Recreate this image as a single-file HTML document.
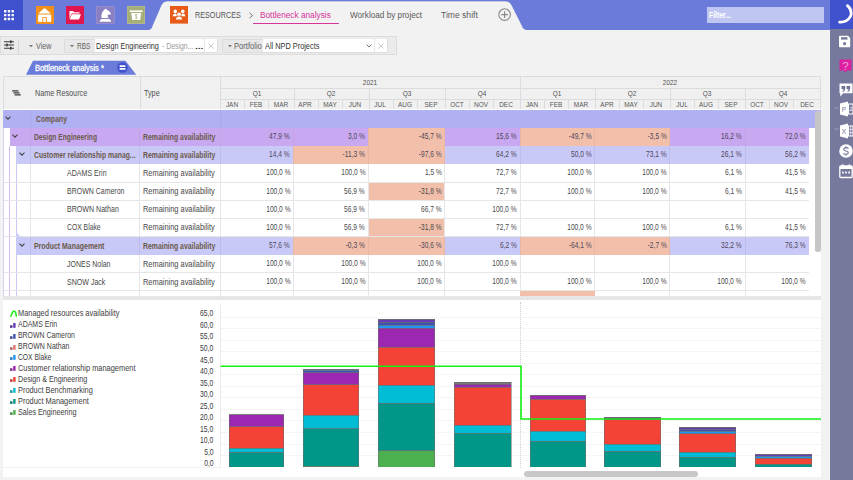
<!DOCTYPE html>
<html><head><meta charset="utf-8"><style>
html,body{margin:0;padding:0;width:853px;height:480px;overflow:hidden;background:#f2f2f2}
body{position:relative;font-family:"Liberation Sans", sans-serif}
body div, body svg{position:absolute}
body svg{overflow:visible}
.t{white-space:nowrap}
</style></head><body>
<div style="left:0px;top:0px;width:853px;height:480px;background:#f2f2f2;"></div>
<div style="left:0px;top:0px;width:830px;height:30px;background:#6a7bda;"></div>
<div style="left:0px;top:0px;width:23px;height:30px;background:#3f51cc;"></div>
<svg style="left:0;top:0" width="23" height="30" viewBox="0 0 23 30"><rect x="4.00" y="10.10" width="2.4" height="2.4" rx="0.5" fill="#fff"/><rect x="4.00" y="13.95" width="2.4" height="2.4" rx="0.5" fill="#fff"/><rect x="4.00" y="17.80" width="2.4" height="2.4" rx="0.5" fill="#fff"/><rect x="7.75" y="10.10" width="2.4" height="2.4" rx="0.5" fill="#fff"/><rect x="7.75" y="13.95" width="2.4" height="2.4" rx="0.5" fill="#fff"/><rect x="7.75" y="17.80" width="2.4" height="2.4" rx="0.5" fill="#fff"/><rect x="11.50" y="10.10" width="2.4" height="2.4" rx="0.5" fill="#fff"/><rect x="11.50" y="13.95" width="2.4" height="2.4" rx="0.5" fill="#fff"/><rect x="11.50" y="17.80" width="2.4" height="2.4" rx="0.5" fill="#fff"/></svg>
<svg style="left:0;top:0" width="853" height="31" viewBox="0 0 853 31">
<path d="M148 30.5 Q151.5 29.5 152.5 27 L162 5 Q163.5 1.8 167 1.8 L506 1.8 Q509.5 1.8 511 5 L522 27 Q523.5 29.5 527 30.5 Z" fill="#f2f2f2"/>
<path d="M152.5 27 L162 5 Q163.5 1.8 167 1.8 L506 1.8 Q509.5 1.8 511 5 L522 27" fill="none" stroke="#fbfbf0" stroke-width="0.7"/>
</svg>
<div style="left:36px;top:6px;width:18px;height:18px"><svg width="18" height="18" viewBox="0 0 18 18"><rect width="18" height="18" fill="#f2901c"/><path d="M8.6 2.1 L14.4 7 L2.8 7 Z" fill="#fff"/><rect x="2.8" y="7" width="11.6" height="1.8" fill="#f6c98f"/><rect x="2.1" y="8.8" width="13.1" height="7.1" fill="#fff"/><rect x="6.3" y="11.1" width="4.5" height="4.8" fill="#f2901c"/><rect x="7.2" y="12" width="2.7" height="3.9" fill="#fff"/></svg></div>
<div style="left:66.4px;top:6px;width:18px;height:18px"><svg width="18" height="18" viewBox="0 0 18 18"><rect width="18" height="18" fill="#e2164e"/><path d="M3.5 5 L7 5 L8 6.2 L13.5 6.2 L13.5 7.5 L5.5 7.5 L3.5 13 Z" fill="#fff"/><path d="M5.8 8.3 L15 8.3 L13 13.5 L3.7 13.5 Z" fill="#fff"/></svg></div>
<div style="left:96.4px;top:6px;width:18px;height:18px"><svg width="18.5" height="17.8" viewBox="0 0 18.5 17.8"><rect x="0.25" y="0.25" width="18" height="17.3" fill="#8a7fc0" stroke="#a79cd3" stroke-width="0.5"/><path d="M10 2.6 L10.9 3.7 Q13.6 4.9 14.9 7.6 L14.3 8.7 Q13 8.3 12.1 8.7 Q11.1 9.3 11.7 10.3 L12.6 11.9 L5.5 11.9 Q5.1 8.5 6.4 6 Q7.8 3.8 10 2.6 Z" fill="#fff"/><path d="M3.6 15.7 Q3.8 13.3 6 13 L12.8 13 Q15 13.3 15.2 15.7 Z" fill="#fff"/></svg></div>
<div style="left:127.2px;top:6px;width:18px;height:18px"><svg width="18" height="18" viewBox="0 0 18 18"><rect x="0.25" y="0.25" width="17.5" height="17.5" fill="#a6ae78" stroke="#c4cc8e" stroke-width="0.5"/><rect x="2.8" y="4.4" width="12.7" height="1.7" fill="#fff"/><path d="M4.2 6.9 L14.1 6.9 L13.2 14 L5.2 14 Z" fill="#fff"/><path d="M9.2 7.9 V13.2 M10.3 8.9 Q9.2 8.2 8.3 8.9 Q7.9 9.8 9.2 10.5 Q10.5 11.2 10.1 12.1 Q9.2 12.8 8.2 12.1" fill="none" stroke="#b3bb86" stroke-width="0.8"/></svg></div>
<div style="left:170px;top:6.2px;width:18px;height:17.6px"><svg width="18" height="17.6" viewBox="0 0 18 17.6"><rect width="18" height="17.6" fill="#e75a17"/>
<circle cx="5.3" cy="5.4" r="1.8" fill="#fff"/><path d="M2.6 10.3 Q2.8 7.6 5.3 7.4 Q7.8 7.6 8 10.3 Z" fill="#fff"/>
<circle cx="12.8" cy="5.4" r="1.8" fill="#fff"/><path d="M10.1 10.3 Q10.3 7.6 12.8 7.4 Q15.3 7.6 15.5 10.3 Z" fill="#fff"/>
<circle cx="9.05" cy="8.3" r="1.9" fill="#fff" stroke="#e75a17" stroke-width="1.4" paint-order="stroke fill"/><path d="M5.9 13.6 Q6.1 10.6 9.05 10.4 Q12 10.6 12.2 13.6 Z" fill="#fff" stroke="#e75a17" stroke-width="1.4" paint-order="stroke fill"/></svg></div>
<div class="t" style="left:194.60px;top:6.78px;height:15.040000000000001px;line-height:15.040000000000001px;font-size:9.4px;font-weight:400;color:#555;transform:scaleX(0.771);transform-origin:0 50%;">RESOURCES</div>
<svg style="left:248px;top:11.5px" width="6" height="7" viewBox="0 0 6 7"><path d="M1.5 0.8 L4.5 3.5 L1.5 6.2" fill="none" stroke="#777" stroke-width="1"/></svg>
<div class="t" style="left:259.70px;top:9.01px;height:13.280000000000001px;line-height:13.280000000000001px;font-size:8.3px;font-weight:400;color:#d6339a;transform:scaleX(0.997);transform-origin:0 50%;">Bottleneck analysis</div>
<div style="left:253px;top:22.8px;width:85.5px;height:1.6px;background:#d8359b;border-radius:1px"></div>
<div class="t" style="left:350.00px;top:9.01px;height:13.280000000000001px;line-height:13.280000000000001px;font-size:8.3px;font-weight:400;color:#5a5a5a;transform:scaleX(0.986);transform-origin:0 50%;">Workload by project</div>
<div class="t" style="left:441.20px;top:9.01px;height:13.280000000000001px;line-height:13.280000000000001px;font-size:8.3px;font-weight:400;color:#5a5a5a;transform:scaleX(1.032);transform-origin:0 50%;">Time shift</div>
<svg style="left:497.5px;top:7.6px" width="13.2" height="13.2" viewBox="0 0 13.2 13.2"><circle cx="6.6" cy="6.6" r="5.8" fill="none" stroke="#888" stroke-width="1.1"/><path d="M6.6 3.3 V9.9 M3.3 6.6 H9.9" stroke="#888" stroke-width="1.2"/></svg>
<div style="left:707px;top:7px;width:117px;height:15.8px;background:#c0c6f2;"></div>
<div class="t" style="left:708.90px;top:9.08px;height:13.440000000000001px;line-height:13.440000000000001px;font-size:8.4px;font-weight:700;color:#fff;transform:scaleX(0.820);transform-origin:0 50%;">Filter...</div>
<div style="left:830px;top:0px;width:23px;height:480px;background:#76799c;"></div>
<div style="left:830px;top:0px;width:23px;height:29.3px;background:#3f51cc;"></div>
<svg style="left:830px;top:0" width="23" height="30" viewBox="0 0 23 30"><path d="M9.6 22.2 Q17.2 22.6 20.6 16.2 Q22.6 11 17.6 5.6" fill="none" stroke="#fff" stroke-width="2.7" stroke-linecap="round"/><path d="M16.6 5.2 Q20.8 7.6 21.8 11 M17.4 4.6 Q21.6 6.8 22.6 10.2 M15.8 6 Q19.6 8.2 20.6 11.6" fill="none" stroke="#fff" stroke-width="0.55" opacity="0.7"/></svg>
<svg style="left:838px;top:34.5px" width="13" height="13" viewBox="0 0 13 13"><path d="M1 1.5 Q1 0.8 1.7 0.8 L10 0.8 L12.2 3 L12.2 11.5 Q12.2 12.2 11.5 12.2 L1.7 12.2 Q1 12.2 1 11.5 Z" fill="#fff"/><rect x="3" y="2.2" width="6.5" height="2.4" fill="#76799c"/><circle cx="6.6" cy="8.6" r="1.6" fill="#76799c"/></svg>
<svg style="left:839px;top:58.5px" width="13" height="15" viewBox="0 0 13 15"><path d="M0.5 0.5 H12.5 V11.5 H8 L6.5 13.8 L5 11.5 H0.5 Z" fill="#dd1fa2"/><text x="6.5" y="10.6" font-size="11.5" text-anchor="middle" fill="#f4a8da" font-family="Liberation Sans">?</text></svg>
<svg style="left:838.8px;top:83.2px" width="14" height="15" viewBox="0 0 14 15"><path d="M0.5 0.4 H13.5 V10.2 H4.2 L1.2 13.4 V10.2 H0.5 Z" fill="#fff"/><path d="M2.6 3 H6.2 V5.6 Q6.1 8.4 3.8 9 L3.4 8.1 Q4.6 7.5 4.7 6.2 H2.6 Z M7.6 3 H11.2 V5.6 Q11.1 8.4 8.8 9 L8.4 8.1 Q9.6 7.5 9.7 6.2 H7.6 Z" fill="#6e7194"/></svg>
<svg style="left:833.5px;top:105.5px" width="5" height="4" viewBox="0 0 5 4"><path d="M0.5 0.8 L2.5 3 L4.5 0.8" fill="none" stroke="#a9abc4" stroke-width="0.8"/></svg>
<svg style="left:833.5px;top:126.5px" width="5" height="4" viewBox="0 0 5 4"><path d="M0.5 0.8 L2.5 3 L4.5 0.8" fill="none" stroke="#a9abc4" stroke-width="0.8"/></svg>
<svg style="left:840px;top:100.5px" width="13" height="16" viewBox="0 0 13 16"><path d="M0 2.5 L8 0.5 V15.5 L0 13.5 Z" fill="#fff"/><rect x="8.5" y="3" width="4.5" height="10" fill="none" stroke="#fff" stroke-width="1"/><text x="4" y="10.5" font-size="6.5" text-anchor="middle" fill="#76799c" font-family="Liberation Sans">P</text><text x="11" y="10" font-size="5" text-anchor="middle" fill="#fff" font-family="Liberation Sans">2</text></svg>
<svg style="left:840px;top:122.5px" width="13" height="16" viewBox="0 0 13 16"><path d="M0 2.5 L8 0.5 V15.5 L0 13.5 Z" fill="#fff"/><rect x="8.5" y="3" width="4.5" height="10" fill="none" stroke="#fff" stroke-width="1"/><path d="M10.7 3 V13 M8.5 6.3 H13 M8.5 9.6 H13" stroke="#fff" stroke-width="0.6"/><text x="4" y="10.5" font-size="6.5" text-anchor="middle" fill="#76799c" font-family="Liberation Sans">X</text></svg>
<svg style="left:838.5px;top:143.5px" width="14" height="14" viewBox="0 0 14 14"><circle cx="7" cy="7" r="6.8" fill="#fff"/><path d="M9.4 4.6 Q8.8 3.6 7 3.6 Q4.8 3.7 4.8 5.3 Q4.9 6.6 7 7 Q9.3 7.4 9.3 8.8 Q9.2 10.4 7 10.4 Q5 10.4 4.5 9.3 M7 2.2 V3.6 M7 10.4 V11.8" fill="none" stroke="#76799c" stroke-width="1.2"/></svg>
<svg style="left:838.5px;top:164px" width="14" height="14" viewBox="0 0 14 14"><rect x="0.8" y="2" width="12.4" height="11.5" rx="1" fill="none" stroke="#fff" stroke-width="1.3"/><rect x="0.8" y="2" width="12.4" height="3" fill="#fff"/><rect x="3" y="0.3" width="1.4" height="2.5" fill="#fff"/><rect x="9.6" y="0.3" width="1.4" height="2.5" fill="#fff"/><rect x="3" y="7.6" width="1.8" height="1.8" fill="#fff"/><rect x="6.1" y="7.6" width="1.8" height="1.8" fill="#fff"/><rect x="9.2" y="7.6" width="1.8" height="1.8" fill="#fff"/></svg>
<div style="left:0px;top:35.8px;width:396.5px;height:19.6px;background:#ebebeb;border:0.7px solid #dcdcdc;box-sizing:border-box"></div>
<svg style="left:4px;top:40.3px" width="10" height="10" viewBox="0 0 10 10"><path d="M0 1.8 H10 M0 5 H10 M0 8.2 H10" stroke="#3a3a3a" stroke-width="1.1"/><rect x="6" y="0.4" width="1.6" height="2.8" fill="#3a3a3a"/><rect x="2.2" y="3.6" width="1.6" height="2.8" fill="#3a3a3a"/><rect x="6" y="6.8" width="1.6" height="2.8" fill="#3a3a3a"/></svg>
<div style="left:18px;top:38.5px;width:0.7px;height:15px;background:#d6d6d6;"></div>
<svg style="left:28.5px;top:45px" width="4" height="3" viewBox="0 0 4 3"><path d="M0 0 H4 L2 2.2 Z" fill="#777"/></svg>
<div class="t" style="left:36.40px;top:39.25px;height:14.4px;line-height:14.4px;font-size:9px;font-weight:400;color:#626262;transform:scaleX(0.800);transform-origin:0 50%;">View</div>
<div style="left:63.5px;top:38.8px;width:154px;height:14.2px;background:#e8e8e8;border:0.6px solid #dcdcdc;border-radius:1.5px;box-sizing:border-box"></div>
<svg style="left:69.5px;top:45px" width="4" height="3" viewBox="0 0 4 3"><path d="M0 0 H4 L2 2.2 Z" fill="#777"/></svg>
<div class="t" style="left:76.90px;top:39.25px;height:14.4px;line-height:14.4px;font-size:9px;font-weight:400;color:#626262;transform:scaleX(0.724);transform-origin:0 50%;">RBS</div>
<div style="left:95px;top:39.4px;width:109px;height:13px;background:#fff;"></div>
<div class="t" style="left:96.10px;top:39.41px;height:14.080000000000002px;line-height:14.080000000000002px;font-size:8.8px;font-weight:400;color:#333;transform:scaleX(0.818);transform-origin:0 50%;">Design Engineering</div>
<div class="t" style="left:162.40px;top:39.41px;height:14.080000000000002px;line-height:14.080000000000002px;font-size:8.8px;font-weight:400;color:#9a9a9a;transform:scaleX(0.781);transform-origin:0 50%;">- Design...</div>
<div class="t" style="left:195.20px;top:40.90px;height:12.8px;line-height:12.8px;font-size:8px;font-weight:700;color:#333;transform:scaleX(1.261);transform-origin:0 50%;">...</div>
<div style="left:204.5px;top:39.4px;width:12.5px;height:13px;background:#fff;"></div>
<svg style="left:207.7px;top:43px" width="6" height="6" viewBox="0 0 6 6"><path d="M0.5 0.5 L5.5 5.5 M5.5 0.5 L0.5 5.5" stroke="#bbb" stroke-width="0.8"/></svg>
<div style="left:221.5px;top:38.8px;width:166px;height:14.2px;background:#e8e8e8;border:0.6px solid #dcdcdc;border-radius:1.5px;box-sizing:border-box"></div>
<svg style="left:227.5px;top:45px" width="4" height="3" viewBox="0 0 4 3"><path d="M0 0 H4 L2 2.2 Z" fill="#777"/></svg>
<div class="t" style="left:234.00px;top:39.25px;height:14.4px;line-height:14.4px;font-size:9px;font-weight:400;color:#626262;transform:scaleX(0.842);transform-origin:0 50%;">Portfolio</div>
<div style="left:263.3px;top:39.4px;width:110.7px;height:13px;background:#fff;"></div>
<div class="t" style="left:265.00px;top:39.41px;height:14.080000000000002px;line-height:14.080000000000002px;font-size:8.8px;font-weight:400;color:#333;transform:scaleX(0.836);transform-origin:0 50%;">All NPD Projects</div>
<svg style="left:365.5px;top:43.5px" width="6" height="4" viewBox="0 0 6 4"><path d="M0.5 0.5 L3 3 L5.5 0.5" fill="none" stroke="#666" stroke-width="0.9"/></svg>
<div style="left:374.5px;top:39.4px;width:12.3px;height:13px;background:#fff;"></div>
<svg style="left:377.7px;top:43px" width="6" height="6" viewBox="0 0 6 6"><path d="M0.5 0.5 L5.5 5.5 M5.5 0.5 L0.5 5.5" stroke="#bbb" stroke-width="0.8"/></svg>
<svg style="left:20px;top:60px" width="120" height="16" viewBox="0 0 120 16"><path d="M6 14.8 L13 0.8 L105.5 0.8 L116.2 14.8 Z" fill="#6a7bda"/></svg>
<div class="t" style="left:34.50px;top:61.62px;height:13.76px;line-height:13.76px;font-size:8.6px;font-weight:400;color:#fff;transform:scaleX(0.868);transform-origin:0 50%;-webkit-text-stroke:0.3px #fff">Bottleneck analysis *</div>
<svg style="left:116.6px;top:62.3px" width="11" height="11" viewBox="0 0 11 11"><circle cx="5.5" cy="5.5" r="5.3" fill="#3f51cc"/><rect x="2.5" y="3.2" width="6" height="1.7" rx="0.6" fill="#fff"/><rect x="2.5" y="6.1" width="6" height="1.7" rx="0.6" fill="#fff"/></svg>
<div style="left:3px;top:76.7px;width:818px;height:219px;background:#fff;"></div>
<div style="left:3px;top:76.7px;width:817.9px;height:32.8px;background:#f0f0f0;"></div>
<div style="left:3px;top:76.2px;width:817.9px;height:1.0px;background:#dcdcdc;"></div>
<div style="left:2.5px;top:76.7px;width:1.0px;height:32.8px;background:#dcdcdc;"></div>
<div style="left:140.3px;top:76.7px;width:1.0px;height:32.8px;background:#dcdcdc;"></div>
<div style="left:220.0px;top:76.7px;width:1.0px;height:32.8px;background:#dcdcdc;"></div>
<div style="left:293.5px;top:88.2px;width:1.0px;height:21.3px;background:#dcdcdc;"></div>
<div style="left:368.5px;top:88.2px;width:1.0px;height:21.3px;background:#dcdcdc;"></div>
<div style="left:444.8px;top:88.2px;width:1.0px;height:21.3px;background:#dcdcdc;"></div>
<div style="left:520.1px;top:76.7px;width:1.0px;height:32.8px;background:#dcdcdc;"></div>
<div style="left:594.8px;top:88.2px;width:1.0px;height:21.3px;background:#dcdcdc;"></div>
<div style="left:669.8px;top:88.2px;width:1.0px;height:21.3px;background:#dcdcdc;"></div>
<div style="left:745.1px;top:88.2px;width:1.0px;height:21.3px;background:#dcdcdc;"></div>
<div style="left:820.1px;top:76.7px;width:1.0px;height:32.8px;background:#dcdcdc;"></div>
<div style="left:220.5px;top:87.7px;width:600px;height:1.0px;background:#dcdcdc;"></div>
<div style="left:220.5px;top:98.9px;width:600px;height:1.0px;background:#dcdcdc;"></div>
<svg style="left:12.3px;top:89.6px" width="9" height="6.4" viewBox="0 0 9 6.4"><path d="M0.2 0.8 H6.4 M1.4 2.9 H7.6 M2.6 5.0 H8.8" stroke="#3a3a3a" stroke-width="1.25"/></svg>
<div class="t" style="left:35.00px;top:86.72px;height:13.76px;line-height:13.76px;font-size:8.6px;font-weight:400;color:#505050;transform:scaleX(0.840);transform-origin:0 50%;">Name Resource</div>
<div class="t" style="left:144.00px;top:86.72px;height:13.76px;line-height:13.76px;font-size:8.6px;font-weight:400;color:#505050;transform:scaleX(0.840);transform-origin:0 50%;">Type</div>
<div class="t" style="left:169.7px;width:400px;text-align:center;top:76.76px;height:11.68px;line-height:11.68px;font-size:7.3px;font-weight:400;color:#505050;transform:scaleX(0.885);transform-origin:50% 50%;">2021</div>
<div class="t" style="left:469.9px;width:400px;text-align:center;top:76.76px;height:11.68px;line-height:11.68px;font-size:7.3px;font-weight:400;color:#505050;transform:scaleX(0.885);transform-origin:50% 50%;">2022</div>
<div class="t" style="left:56.64999999999998px;width:400px;text-align:center;top:88.01px;height:11.68px;line-height:11.68px;font-size:7.3px;font-weight:400;color:#505050;transform:scaleX(0.885);transform-origin:50% 50%;">Q1</div>
<div class="t" style="left:31.950000000000017px;width:400px;text-align:center;top:98.66px;height:11.68px;line-height:11.68px;font-size:7.3px;font-weight:400;color:#585858;transform:scaleX(0.885);transform-origin:50% 50%;">JAN</div>
<div style="left:244.1px;top:99.4px;width:1.0px;height:10.1px;background:#dcdcdc;"></div>
<div class="t" style="left:56.049999999999955px;width:400px;text-align:center;top:98.66px;height:11.68px;line-height:11.68px;font-size:7.3px;font-weight:400;color:#585858;transform:scaleX(0.885);transform-origin:50% 50%;">FEB</div>
<div style="left:268.2px;top:99.4px;width:1.0px;height:10.1px;background:#dcdcdc;"></div>
<div class="t" style="left:80.75px;width:400px;text-align:center;top:98.66px;height:11.68px;line-height:11.68px;font-size:7.3px;font-weight:400;color:#585858;transform:scaleX(0.885);transform-origin:50% 50%;">MAR</div>
<div class="t" style="left:130.89999999999998px;width:400px;text-align:center;top:88.01px;height:11.68px;line-height:11.68px;font-size:7.3px;font-weight:400;color:#505050;transform:scaleX(0.885);transform-origin:50% 50%;">Q2</div>
<div class="t" style="left:105.44999999999999px;width:400px;text-align:center;top:98.66px;height:11.68px;line-height:11.68px;font-size:7.3px;font-weight:400;color:#585858;transform:scaleX(0.885);transform-origin:50% 50%;">APR</div>
<div style="left:317.6px;top:99.4px;width:1.0px;height:10.1px;background:#dcdcdc;"></div>
<div class="t" style="left:129.54999999999995px;width:400px;text-align:center;top:98.66px;height:11.68px;line-height:11.68px;font-size:7.3px;font-weight:400;color:#585858;transform:scaleX(0.885);transform-origin:50% 50%;">MAY</div>
<div style="left:341.7px;top:99.4px;width:1.0px;height:10.1px;background:#dcdcdc;"></div>
<div class="t" style="left:155.0px;width:400px;text-align:center;top:98.66px;height:11.68px;line-height:11.68px;font-size:7.3px;font-weight:400;color:#585858;transform:scaleX(0.885);transform-origin:50% 50%;">JUN</div>
<div class="t" style="left:206.54999999999995px;width:400px;text-align:center;top:88.01px;height:11.68px;line-height:11.68px;font-size:7.3px;font-weight:400;color:#505050;transform:scaleX(0.885);transform-origin:50% 50%;">Q3</div>
<div class="t" style="left:180.45px;width:400px;text-align:center;top:98.66px;height:11.68px;line-height:11.68px;font-size:7.3px;font-weight:400;color:#585858;transform:scaleX(0.885);transform-origin:50% 50%;">JUL</div>
<div style="left:392.6px;top:99.4px;width:1.0px;height:10.1px;background:#dcdcdc;"></div>
<div class="t" style="left:204.54999999999995px;width:400px;text-align:center;top:98.66px;height:11.68px;line-height:11.68px;font-size:7.3px;font-weight:400;color:#585858;transform:scaleX(0.885);transform-origin:50% 50%;">AUG</div>
<div style="left:416.7px;top:99.4px;width:1.0px;height:10.1px;background:#dcdcdc;"></div>
<div class="t" style="left:230.64999999999998px;width:400px;text-align:center;top:98.66px;height:11.68px;line-height:11.68px;font-size:7.3px;font-weight:400;color:#585858;transform:scaleX(0.885);transform-origin:50% 50%;">SEP</div>
<div class="t" style="left:282.35px;width:400px;text-align:center;top:88.01px;height:11.68px;line-height:11.68px;font-size:7.3px;font-weight:400;color:#505050;transform:scaleX(0.885);transform-origin:50% 50%;">Q4</div>
<div class="t" style="left:256.75px;width:400px;text-align:center;top:98.66px;height:11.68px;line-height:11.68px;font-size:7.3px;font-weight:400;color:#585858;transform:scaleX(0.885);transform-origin:50% 50%;">OCT</div>
<div style="left:468.90000000000003px;top:99.4px;width:1.0px;height:10.1px;background:#dcdcdc;"></div>
<div class="t" style="left:280.85px;width:400px;text-align:center;top:98.66px;height:11.68px;line-height:11.68px;font-size:7.3px;font-weight:400;color:#585858;transform:scaleX(0.885);transform-origin:50% 50%;">NOV</div>
<div style="left:493.0px;top:99.4px;width:1.0px;height:10.1px;background:#dcdcdc;"></div>
<div class="t" style="left:306.45px;width:400px;text-align:center;top:98.66px;height:11.68px;line-height:11.68px;font-size:7.3px;font-weight:400;color:#585858;transform:scaleX(0.885);transform-origin:50% 50%;">DEC</div>
<div class="t" style="left:357.35px;width:400px;text-align:center;top:88.01px;height:11.68px;line-height:11.68px;font-size:7.3px;font-weight:400;color:#505050;transform:scaleX(0.885);transform-origin:50% 50%;">Q1</div>
<div class="t" style="left:332.05000000000007px;width:400px;text-align:center;top:98.66px;height:11.68px;line-height:11.68px;font-size:7.3px;font-weight:400;color:#585858;transform:scaleX(0.885);transform-origin:50% 50%;">JAN</div>
<div style="left:544.2px;top:99.4px;width:1.0px;height:10.1px;background:#dcdcdc;"></div>
<div class="t" style="left:356.15px;width:400px;text-align:center;top:98.66px;height:11.68px;line-height:11.68px;font-size:7.3px;font-weight:400;color:#585858;transform:scaleX(0.885);transform-origin:50% 50%;">FEB</div>
<div style="left:568.3000000000001px;top:99.4px;width:1.0px;height:10.1px;background:#dcdcdc;"></div>
<div class="t" style="left:381.44999999999993px;width:400px;text-align:center;top:98.66px;height:11.68px;line-height:11.68px;font-size:7.3px;font-weight:400;color:#585858;transform:scaleX(0.885);transform-origin:50% 50%;">MAR</div>
<div class="t" style="left:432.19999999999993px;width:400px;text-align:center;top:88.01px;height:11.68px;line-height:11.68px;font-size:7.3px;font-weight:400;color:#505050;transform:scaleX(0.885);transform-origin:50% 50%;">Q2</div>
<div class="t" style="left:406.7499999999999px;width:400px;text-align:center;top:98.66px;height:11.68px;line-height:11.68px;font-size:7.3px;font-weight:400;color:#585858;transform:scaleX(0.885);transform-origin:50% 50%;">APR</div>
<div style="left:618.9px;top:99.4px;width:1.0px;height:10.1px;background:#dcdcdc;"></div>
<div class="t" style="left:430.85px;width:400px;text-align:center;top:98.66px;height:11.68px;line-height:11.68px;font-size:7.3px;font-weight:400;color:#585858;transform:scaleX(0.885);transform-origin:50% 50%;">MAY</div>
<div style="left:643.0px;top:99.4px;width:1.0px;height:10.1px;background:#dcdcdc;"></div>
<div class="t" style="left:456.29999999999995px;width:400px;text-align:center;top:98.66px;height:11.68px;line-height:11.68px;font-size:7.3px;font-weight:400;color:#585858;transform:scaleX(0.885);transform-origin:50% 50%;">JUN</div>
<div class="t" style="left:507.35px;width:400px;text-align:center;top:88.01px;height:11.68px;line-height:11.68px;font-size:7.3px;font-weight:400;color:#505050;transform:scaleX(0.885);transform-origin:50% 50%;">Q3</div>
<div class="t" style="left:481.7499999999999px;width:400px;text-align:center;top:98.66px;height:11.68px;line-height:11.68px;font-size:7.3px;font-weight:400;color:#585858;transform:scaleX(0.885);transform-origin:50% 50%;">JUL</div>
<div style="left:693.9px;top:99.4px;width:1.0px;height:10.1px;background:#dcdcdc;"></div>
<div class="t" style="left:505.85px;width:400px;text-align:center;top:98.66px;height:11.68px;line-height:11.68px;font-size:7.3px;font-weight:400;color:#585858;transform:scaleX(0.885);transform-origin:50% 50%;">AUG</div>
<div style="left:718.0px;top:99.4px;width:1.0px;height:10.1px;background:#dcdcdc;"></div>
<div class="t" style="left:531.4499999999999px;width:400px;text-align:center;top:98.66px;height:11.68px;line-height:11.68px;font-size:7.3px;font-weight:400;color:#585858;transform:scaleX(0.885);transform-origin:50% 50%;">SEP</div>
<div class="t" style="left:582.5px;width:400px;text-align:center;top:88.01px;height:11.68px;line-height:11.68px;font-size:7.3px;font-weight:400;color:#505050;transform:scaleX(0.885);transform-origin:50% 50%;">Q4</div>
<div class="t" style="left:557.0500000000001px;width:400px;text-align:center;top:98.66px;height:11.68px;line-height:11.68px;font-size:7.3px;font-weight:400;color:#585858;transform:scaleX(0.885);transform-origin:50% 50%;">OCT</div>
<div style="left:769.2px;top:99.4px;width:1.0px;height:10.1px;background:#dcdcdc;"></div>
<div class="t" style="left:581.15px;width:400px;text-align:center;top:98.66px;height:11.68px;line-height:11.68px;font-size:7.3px;font-weight:400;color:#585858;transform:scaleX(0.885);transform-origin:50% 50%;">NOV</div>
<div style="left:793.3000000000001px;top:99.4px;width:1.0px;height:10.1px;background:#dcdcdc;"></div>
<div class="t" style="left:606.6px;width:400px;text-align:center;top:98.66px;height:11.68px;line-height:11.68px;font-size:7.3px;font-weight:400;color:#585858;transform:scaleX(0.885);transform-origin:50% 50%;">DEC</div>
<div style="left:3px;top:109.5px;width:817.6px;height:18.13px;background:#b0b1f2;"></div>
<div style="left:29.7px;top:109.5px;width:1.0px;height:18.13px;background:#a9aae9;"></div>
<div style="left:219.5px;top:109.5px;width:1.0px;height:18.13px;background:#a9aae9;"></div>
<svg style="left:5px;top:115.97px" width="6" height="4" viewBox="0 0 6 4"><path d="M0.5 0.7 L3 3.1 L5.5 0.7" fill="none" stroke="#454545" stroke-width="1.15"/></svg>
<div class="t" style="left:35.70px;top:112.64px;height:13.440000000000001px;line-height:13.440000000000001px;font-size:8.4px;font-weight:700;color:#6b5949;transform:scaleX(0.810);transform-origin:0 50%;">Company</div>
<div style="left:9.5px;top:127.63px;width:799.5px;height:18.13px;background:#c8a9f1;"></div>
<div style="left:2.8px;top:127.63px;width:1px;height:18.13px;background:#d4d4f6;"></div>
<div style="left:29.7px;top:127.63px;width:1.0px;height:18.13px;background:#c2a4e6;"></div>
<div style="left:139.1px;top:127.63px;width:1.0px;height:18.13px;background:#c2a4e6;"></div>
<div style="left:219.5px;top:127.63px;width:1.0px;height:18.13px;background:#c2a4e6;"></div>
<svg style="left:11.5px;top:134.09px" width="6" height="4" viewBox="0 0 6 4"><path d="M0.5 0.7 L3 3.1 L5.5 0.7" fill="none" stroke="#454545" stroke-width="1.15"/></svg>
<div class="t" style="left:33.90px;top:130.78px;height:13.440000000000001px;line-height:13.440000000000001px;font-size:8.4px;font-weight:700;color:#6b5949;transform:scaleX(0.801);transform-origin:0 50%;">Design Engineering</div>
<div class="t" style="left:143.10px;top:130.78px;height:13.440000000000001px;line-height:13.440000000000001px;font-size:8.4px;font-weight:700;color:#6b5949;transform:scaleX(0.822);transform-origin:0 50%;">Remaining availability</div>
<div class="t" style="right:562.80px;top:130.12px;height:13.76px;line-height:13.76px;font-size:8.6px;font-weight:400;color:#504858;transform:scaleX(0.772);transform-origin:100% 50%;">47,9 %</div>
<div style="left:292.9px;top:127.63px;width:1.0px;height:18.13px;background:#c2a4e6;"></div>
<div class="t" style="right:487.80px;top:130.12px;height:13.76px;line-height:13.76px;font-size:8.6px;font-weight:400;color:#504858;transform:scaleX(0.772);transform-origin:100% 50%;">3,0 %</div>
<div style="left:368.4px;top:127.63px;width:76.30000000000001px;height:18.13px;background:#f2c0aa;"></div>
<div style="left:367.9px;top:127.63px;width:1.0px;height:18.13px;background:#e8b8a4;"></div>
<div class="t" style="right:411.50px;top:130.12px;height:13.76px;line-height:13.76px;font-size:8.6px;font-weight:400;color:#504858;transform:scaleX(0.772);transform-origin:100% 50%;">-45,7 %</div>
<div style="left:444.2px;top:127.63px;width:1.0px;height:18.13px;background:#e8b8a4;"></div>
<div class="t" style="right:336.20px;top:130.12px;height:13.76px;line-height:13.76px;font-size:8.6px;font-weight:400;color:#504858;transform:scaleX(0.772);transform-origin:100% 50%;">15,6 %</div>
<div style="left:520.0px;top:127.63px;width:74.70000000000005px;height:18.13px;background:#f2c0aa;"></div>
<div style="left:519.5px;top:127.63px;width:1.0px;height:18.13px;background:#e8b8a4;"></div>
<div class="t" style="right:261.50px;top:130.12px;height:13.76px;line-height:13.76px;font-size:8.6px;font-weight:400;color:#504858;transform:scaleX(0.772);transform-origin:100% 50%;">-49,7 %</div>
<div style="left:594.7px;top:127.63px;width:75.0px;height:18.13px;background:#f2c0aa;"></div>
<div style="left:594.2px;top:127.63px;width:1.0px;height:18.13px;background:#e8b8a4;"></div>
<div class="t" style="right:186.50px;top:130.12px;height:13.76px;line-height:13.76px;font-size:8.6px;font-weight:400;color:#504858;transform:scaleX(0.772);transform-origin:100% 50%;">-3,5 %</div>
<div style="left:669.2px;top:127.63px;width:1.0px;height:18.13px;background:#e8b8a4;"></div>
<div class="t" style="right:111.20px;top:130.12px;height:13.76px;line-height:13.76px;font-size:8.6px;font-weight:400;color:#504858;transform:scaleX(0.772);transform-origin:100% 50%;">16,2 %</div>
<div style="left:744.5px;top:127.63px;width:1.0px;height:18.13px;background:#c2a4e6;"></div>
<div class="t" style="right:47.20px;top:130.12px;height:13.76px;line-height:13.76px;font-size:8.6px;font-weight:400;color:#504858;transform:scaleX(0.772);transform-origin:100% 50%;">72,0 %</div>
<div style="left:16.3px;top:145.76px;width:792.7px;height:18.13px;background:#c9c9f8;"></div>
<div style="left:9.2px;top:145.76px;width:1px;height:18.13px;background:#d6bcf5;"></div>
<div style="left:2.8px;top:145.76px;width:1px;height:18.13px;background:#d4d4f6;"></div>
<div style="left:29.7px;top:145.76px;width:1.0px;height:18.13px;background:#bdbdeb;"></div>
<div style="left:139.1px;top:145.76px;width:1.0px;height:18.13px;background:#bdbdeb;"></div>
<div style="left:219.5px;top:145.76px;width:1.0px;height:18.13px;background:#bdbdeb;"></div>
<svg style="left:18.5px;top:152.22px" width="6" height="4" viewBox="0 0 6 4"><path d="M0.5 0.7 L3 3.1 L5.5 0.7" fill="none" stroke="#454545" stroke-width="1.15"/></svg>
<div class="t" style="left:33.90px;top:148.91px;height:13.440000000000001px;line-height:13.440000000000001px;font-size:8.4px;font-weight:700;color:#6b5949;transform:scaleX(0.811);transform-origin:0 50%;">Customer relationship manag...</div>
<div class="t" style="left:143.10px;top:148.91px;height:13.440000000000001px;line-height:13.440000000000001px;font-size:8.4px;font-weight:700;color:#6b5949;transform:scaleX(0.822);transform-origin:0 50%;">Remaining availability</div>
<div class="t" style="right:562.80px;top:148.25px;height:13.76px;line-height:13.76px;font-size:8.6px;font-weight:400;color:#504858;transform:scaleX(0.772);transform-origin:100% 50%;">14,4 %</div>
<div style="left:293.4px;top:145.76px;width:75.0px;height:18.13px;background:#f2c0aa;"></div>
<div style="left:292.9px;top:145.76px;width:1.0px;height:18.13px;background:#e8b8a4;"></div>
<div class="t" style="right:487.80px;top:148.25px;height:13.76px;line-height:13.76px;font-size:8.6px;font-weight:400;color:#504858;transform:scaleX(0.772);transform-origin:100% 50%;">-11,3 %</div>
<div style="left:368.4px;top:145.76px;width:76.30000000000001px;height:18.13px;background:#f2c0aa;"></div>
<div style="left:367.9px;top:145.76px;width:1.0px;height:18.13px;background:#e8b8a4;"></div>
<div class="t" style="right:411.50px;top:148.25px;height:13.76px;line-height:13.76px;font-size:8.6px;font-weight:400;color:#504858;transform:scaleX(0.772);transform-origin:100% 50%;">-97,6 %</div>
<div style="left:444.2px;top:145.76px;width:1.0px;height:18.13px;background:#e8b8a4;"></div>
<div class="t" style="right:336.20px;top:148.25px;height:13.76px;line-height:13.76px;font-size:8.6px;font-weight:400;color:#504858;transform:scaleX(0.772);transform-origin:100% 50%;">64,2 %</div>
<div style="left:519.5px;top:145.76px;width:1.0px;height:18.13px;background:#bdbdeb;"></div>
<div class="t" style="right:261.50px;top:148.25px;height:13.76px;line-height:13.76px;font-size:8.6px;font-weight:400;color:#504858;transform:scaleX(0.772);transform-origin:100% 50%;">50,0 %</div>
<div style="left:594.2px;top:145.76px;width:1.0px;height:18.13px;background:#bdbdeb;"></div>
<div class="t" style="right:186.50px;top:148.25px;height:13.76px;line-height:13.76px;font-size:8.6px;font-weight:400;color:#504858;transform:scaleX(0.772);transform-origin:100% 50%;">73,1 %</div>
<div style="left:669.2px;top:145.76px;width:1.0px;height:18.13px;background:#bdbdeb;"></div>
<div class="t" style="right:111.20px;top:148.25px;height:13.76px;line-height:13.76px;font-size:8.6px;font-weight:400;color:#504858;transform:scaleX(0.772);transform-origin:100% 50%;">26,1 %</div>
<div style="left:744.5px;top:145.76px;width:1.0px;height:18.13px;background:#bdbdeb;"></div>
<div class="t" style="right:47.20px;top:148.25px;height:13.76px;line-height:13.76px;font-size:8.6px;font-weight:400;color:#504858;transform:scaleX(0.772);transform-origin:100% 50%;">56,2 %</div>
<div style="left:30px;top:163.89px;width:779px;height:18.13px;background:#fff;"></div>
<div style="left:9.2px;top:163.89px;width:1px;height:18.13px;background:#d6bcf5;"></div>
<div style="left:16.2px;top:163.89px;width:1px;height:18.13px;background:#c9c9f8;"></div>
<div style="left:2.8px;top:163.89px;width:1px;height:18.13px;background:#d4d4f6;"></div>
<div style="left:29.7px;top:163.89px;width:1.0px;height:18.13px;background:#e6e6e6;"></div>
<div style="left:139.1px;top:163.89px;width:1.0px;height:18.13px;background:#e6e6e6;"></div>
<div style="left:219.5px;top:163.89px;width:1.0px;height:18.13px;background:#e6e6e6;"></div>
<div class="t" style="left:67.40px;top:166.06px;height:14.4px;line-height:14.4px;font-size:9px;font-weight:400;color:#474747;transform:scaleX(0.784);transform-origin:0 50%;">ADAMS Erin</div>
<div class="t" style="left:143.30px;top:166.06px;height:14.4px;line-height:14.4px;font-size:9px;font-weight:400;color:#474747;transform:scaleX(0.824);transform-origin:0 50%;">Remaining availability</div>
<div class="t" style="right:562.80px;top:166.38px;height:13.76px;line-height:13.76px;font-size:8.6px;font-weight:400;color:#4a4a4a;transform:scaleX(0.772);transform-origin:100% 50%;">100,0 %</div>
<div style="left:292.9px;top:163.89px;width:1.0px;height:18.13px;background:#e6e6e6;"></div>
<div class="t" style="right:487.80px;top:166.38px;height:13.76px;line-height:13.76px;font-size:8.6px;font-weight:400;color:#4a4a4a;transform:scaleX(0.772);transform-origin:100% 50%;">100,0 %</div>
<div style="left:367.9px;top:163.89px;width:1.0px;height:18.13px;background:#e6e6e6;"></div>
<div class="t" style="right:411.50px;top:166.38px;height:13.76px;line-height:13.76px;font-size:8.6px;font-weight:400;color:#4a4a4a;transform:scaleX(0.772);transform-origin:100% 50%;">1,5 %</div>
<div style="left:444.2px;top:163.89px;width:1.0px;height:18.13px;background:#e6e6e6;"></div>
<div class="t" style="right:336.20px;top:166.38px;height:13.76px;line-height:13.76px;font-size:8.6px;font-weight:400;color:#4a4a4a;transform:scaleX(0.772);transform-origin:100% 50%;">72,7 %</div>
<div style="left:519.5px;top:163.89px;width:1.0px;height:18.13px;background:#e6e6e6;"></div>
<div class="t" style="right:261.50px;top:166.38px;height:13.76px;line-height:13.76px;font-size:8.6px;font-weight:400;color:#4a4a4a;transform:scaleX(0.772);transform-origin:100% 50%;">100,0 %</div>
<div style="left:594.2px;top:163.89px;width:1.0px;height:18.13px;background:#e6e6e6;"></div>
<div class="t" style="right:186.50px;top:166.38px;height:13.76px;line-height:13.76px;font-size:8.6px;font-weight:400;color:#4a4a4a;transform:scaleX(0.772);transform-origin:100% 50%;">100,0 %</div>
<div style="left:669.2px;top:163.89px;width:1.0px;height:18.13px;background:#e6e6e6;"></div>
<div class="t" style="right:111.20px;top:166.38px;height:13.76px;line-height:13.76px;font-size:8.6px;font-weight:400;color:#4a4a4a;transform:scaleX(0.772);transform-origin:100% 50%;">6,1 %</div>
<div style="left:744.5px;top:163.89px;width:1.0px;height:18.13px;background:#e6e6e6;"></div>
<div class="t" style="right:47.20px;top:166.38px;height:13.76px;line-height:13.76px;font-size:8.6px;font-weight:400;color:#4a4a4a;transform:scaleX(0.772);transform-origin:100% 50%;">41,5 %</div>
<div style="left:30px;top:182.01999999999998px;width:779px;height:18.13px;background:#fff;"></div>
<div style="left:9.2px;top:182.01999999999998px;width:1px;height:18.13px;background:#d6bcf5;"></div>
<div style="left:16.2px;top:182.01999999999998px;width:1px;height:18.13px;background:#c9c9f8;"></div>
<div style="left:2.8px;top:182.01999999999998px;width:1px;height:18.13px;background:#d4d4f6;"></div>
<div style="left:29.7px;top:182.01999999999998px;width:1.0px;height:18.13px;background:#e6e6e6;"></div>
<div style="left:139.1px;top:182.01999999999998px;width:1.0px;height:18.13px;background:#e6e6e6;"></div>
<div style="left:219.5px;top:182.01999999999998px;width:1.0px;height:18.13px;background:#e6e6e6;"></div>
<div class="t" style="left:67.40px;top:184.19px;height:14.4px;line-height:14.4px;font-size:9px;font-weight:400;color:#474747;transform:scaleX(0.776);transform-origin:0 50%;">BROWN Cameron</div>
<div class="t" style="left:143.30px;top:184.19px;height:14.4px;line-height:14.4px;font-size:9px;font-weight:400;color:#474747;transform:scaleX(0.824);transform-origin:0 50%;">Remaining availability</div>
<div class="t" style="right:562.80px;top:184.50px;height:13.76px;line-height:13.76px;font-size:8.6px;font-weight:400;color:#4a4a4a;transform:scaleX(0.772);transform-origin:100% 50%;">100,0 %</div>
<div style="left:292.9px;top:182.01999999999998px;width:1.0px;height:18.13px;background:#e6e6e6;"></div>
<div class="t" style="right:487.80px;top:184.50px;height:13.76px;line-height:13.76px;font-size:8.6px;font-weight:400;color:#4a4a4a;transform:scaleX(0.772);transform-origin:100% 50%;">56,9 %</div>
<div style="left:368.4px;top:182.01999999999998px;width:76.30000000000001px;height:18.13px;background:#f2c0aa;"></div>
<div style="left:367.9px;top:182.01999999999998px;width:1.0px;height:18.13px;background:#e6e6e6;"></div>
<div class="t" style="right:411.50px;top:184.50px;height:13.76px;line-height:13.76px;font-size:8.6px;font-weight:400;color:#4a4a4a;transform:scaleX(0.772);transform-origin:100% 50%;">-31,8 %</div>
<div style="left:444.2px;top:182.01999999999998px;width:1.0px;height:18.13px;background:#e6e6e6;"></div>
<div class="t" style="right:336.20px;top:184.50px;height:13.76px;line-height:13.76px;font-size:8.6px;font-weight:400;color:#4a4a4a;transform:scaleX(0.772);transform-origin:100% 50%;">72,7 %</div>
<div style="left:519.5px;top:182.01999999999998px;width:1.0px;height:18.13px;background:#e6e6e6;"></div>
<div class="t" style="right:261.50px;top:184.50px;height:13.76px;line-height:13.76px;font-size:8.6px;font-weight:400;color:#4a4a4a;transform:scaleX(0.772);transform-origin:100% 50%;">100,0 %</div>
<div style="left:594.2px;top:182.01999999999998px;width:1.0px;height:18.13px;background:#e6e6e6;"></div>
<div class="t" style="right:186.50px;top:184.50px;height:13.76px;line-height:13.76px;font-size:8.6px;font-weight:400;color:#4a4a4a;transform:scaleX(0.772);transform-origin:100% 50%;">100,0 %</div>
<div style="left:669.2px;top:182.01999999999998px;width:1.0px;height:18.13px;background:#e6e6e6;"></div>
<div class="t" style="right:111.20px;top:184.50px;height:13.76px;line-height:13.76px;font-size:8.6px;font-weight:400;color:#4a4a4a;transform:scaleX(0.772);transform-origin:100% 50%;">6,1 %</div>
<div style="left:744.5px;top:182.01999999999998px;width:1.0px;height:18.13px;background:#e6e6e6;"></div>
<div class="t" style="right:47.20px;top:184.50px;height:13.76px;line-height:13.76px;font-size:8.6px;font-weight:400;color:#4a4a4a;transform:scaleX(0.772);transform-origin:100% 50%;">41,5 %</div>
<div style="left:30px;top:200.14999999999998px;width:779px;height:18.13px;background:#fff;"></div>
<div style="left:9.2px;top:200.14999999999998px;width:1px;height:18.13px;background:#d6bcf5;"></div>
<div style="left:16.2px;top:200.14999999999998px;width:1px;height:18.13px;background:#c9c9f8;"></div>
<div style="left:2.8px;top:200.14999999999998px;width:1px;height:18.13px;background:#d4d4f6;"></div>
<div style="left:29.7px;top:200.14999999999998px;width:1.0px;height:18.13px;background:#e6e6e6;"></div>
<div style="left:139.1px;top:200.14999999999998px;width:1.0px;height:18.13px;background:#e6e6e6;"></div>
<div style="left:219.5px;top:200.14999999999998px;width:1.0px;height:18.13px;background:#e6e6e6;"></div>
<div class="t" style="left:67.40px;top:202.31px;height:14.4px;line-height:14.4px;font-size:9px;font-weight:400;color:#474747;transform:scaleX(0.785);transform-origin:0 50%;">BROWN Nathan</div>
<div class="t" style="left:143.30px;top:202.31px;height:14.4px;line-height:14.4px;font-size:9px;font-weight:400;color:#474747;transform:scaleX(0.824);transform-origin:0 50%;">Remaining availability</div>
<div class="t" style="right:562.80px;top:202.63px;height:13.76px;line-height:13.76px;font-size:8.6px;font-weight:400;color:#4a4a4a;transform:scaleX(0.772);transform-origin:100% 50%;">100,0 %</div>
<div style="left:292.9px;top:200.14999999999998px;width:1.0px;height:18.13px;background:#e6e6e6;"></div>
<div class="t" style="right:487.80px;top:202.63px;height:13.76px;line-height:13.76px;font-size:8.6px;font-weight:400;color:#4a4a4a;transform:scaleX(0.772);transform-origin:100% 50%;">56,9 %</div>
<div style="left:367.9px;top:200.14999999999998px;width:1.0px;height:18.13px;background:#e6e6e6;"></div>
<div class="t" style="right:411.50px;top:202.63px;height:13.76px;line-height:13.76px;font-size:8.6px;font-weight:400;color:#4a4a4a;transform:scaleX(0.772);transform-origin:100% 50%;">66,7 %</div>
<div style="left:444.2px;top:200.14999999999998px;width:1.0px;height:18.13px;background:#e6e6e6;"></div>
<div class="t" style="right:336.20px;top:202.63px;height:13.76px;line-height:13.76px;font-size:8.6px;font-weight:400;color:#4a4a4a;transform:scaleX(0.772);transform-origin:100% 50%;">100,0 %</div>
<div style="left:519.5px;top:200.14999999999998px;width:1.0px;height:18.13px;background:#e6e6e6;"></div>
<div style="left:594.2px;top:200.14999999999998px;width:1.0px;height:18.13px;background:#e6e6e6;"></div>
<div style="left:669.2px;top:200.14999999999998px;width:1.0px;height:18.13px;background:#e6e6e6;"></div>
<div style="left:744.5px;top:200.14999999999998px;width:1.0px;height:18.13px;background:#e6e6e6;"></div>
<div style="left:30px;top:218.28px;width:779px;height:18.13px;background:#fff;"></div>
<div style="left:9.2px;top:218.28px;width:1px;height:18.13px;background:#d6bcf5;"></div>
<div style="left:16.2px;top:218.28px;width:1px;height:18.13px;background:#c9c9f8;"></div>
<div style="left:2.8px;top:218.28px;width:1px;height:18.13px;background:#d4d4f6;"></div>
<div style="left:29.7px;top:218.28px;width:1.0px;height:18.13px;background:#e6e6e6;"></div>
<div style="left:139.1px;top:218.28px;width:1.0px;height:18.13px;background:#e6e6e6;"></div>
<div style="left:219.5px;top:218.28px;width:1.0px;height:18.13px;background:#e6e6e6;"></div>
<div class="t" style="left:67.40px;top:220.45px;height:14.4px;line-height:14.4px;font-size:9px;font-weight:400;color:#474747;transform:scaleX(0.755);transform-origin:0 50%;">COX Blake</div>
<div class="t" style="left:143.30px;top:220.45px;height:14.4px;line-height:14.4px;font-size:9px;font-weight:400;color:#474747;transform:scaleX(0.824);transform-origin:0 50%;">Remaining availability</div>
<div class="t" style="right:562.80px;top:220.77px;height:13.76px;line-height:13.76px;font-size:8.6px;font-weight:400;color:#4a4a4a;transform:scaleX(0.772);transform-origin:100% 50%;">100,0 %</div>
<div style="left:292.9px;top:218.28px;width:1.0px;height:18.13px;background:#e6e6e6;"></div>
<div class="t" style="right:487.80px;top:220.77px;height:13.76px;line-height:13.76px;font-size:8.6px;font-weight:400;color:#4a4a4a;transform:scaleX(0.772);transform-origin:100% 50%;">56,9 %</div>
<div style="left:368.4px;top:218.28px;width:76.30000000000001px;height:18.13px;background:#f2c0aa;"></div>
<div style="left:367.9px;top:218.28px;width:1.0px;height:18.13px;background:#e6e6e6;"></div>
<div class="t" style="right:411.50px;top:220.77px;height:13.76px;line-height:13.76px;font-size:8.6px;font-weight:400;color:#4a4a4a;transform:scaleX(0.772);transform-origin:100% 50%;">-31,8 %</div>
<div style="left:444.2px;top:218.28px;width:1.0px;height:18.13px;background:#e6e6e6;"></div>
<div class="t" style="right:336.20px;top:220.77px;height:13.76px;line-height:13.76px;font-size:8.6px;font-weight:400;color:#4a4a4a;transform:scaleX(0.772);transform-origin:100% 50%;">72,7 %</div>
<div style="left:519.5px;top:218.28px;width:1.0px;height:18.13px;background:#e6e6e6;"></div>
<div class="t" style="right:261.50px;top:220.77px;height:13.76px;line-height:13.76px;font-size:8.6px;font-weight:400;color:#4a4a4a;transform:scaleX(0.772);transform-origin:100% 50%;">100,0 %</div>
<div style="left:594.2px;top:218.28px;width:1.0px;height:18.13px;background:#e6e6e6;"></div>
<div class="t" style="right:186.50px;top:220.77px;height:13.76px;line-height:13.76px;font-size:8.6px;font-weight:400;color:#4a4a4a;transform:scaleX(0.772);transform-origin:100% 50%;">100,0 %</div>
<div style="left:669.2px;top:218.28px;width:1.0px;height:18.13px;background:#e6e6e6;"></div>
<div class="t" style="right:111.20px;top:220.77px;height:13.76px;line-height:13.76px;font-size:8.6px;font-weight:400;color:#4a4a4a;transform:scaleX(0.772);transform-origin:100% 50%;">6,1 %</div>
<div style="left:744.5px;top:218.28px;width:1.0px;height:18.13px;background:#e6e6e6;"></div>
<div class="t" style="right:47.20px;top:220.77px;height:13.76px;line-height:13.76px;font-size:8.6px;font-weight:400;color:#4a4a4a;transform:scaleX(0.772);transform-origin:100% 50%;">41,5 %</div>
<div style="left:16.3px;top:236.41px;width:792.7px;height:18.13px;background:#c9c9f8;"></div>
<div style="left:9.2px;top:236.41px;width:1px;height:18.13px;background:#d6bcf5;"></div>
<div style="left:2.8px;top:236.41px;width:1px;height:18.13px;background:#d4d4f6;"></div>
<div style="left:29.7px;top:236.41px;width:1.0px;height:18.13px;background:#bdbdeb;"></div>
<div style="left:139.1px;top:236.41px;width:1.0px;height:18.13px;background:#bdbdeb;"></div>
<div style="left:219.5px;top:236.41px;width:1.0px;height:18.13px;background:#bdbdeb;"></div>
<svg style="left:18.5px;top:242.88px" width="6" height="4" viewBox="0 0 6 4"><path d="M0.5 0.7 L3 3.1 L5.5 0.7" fill="none" stroke="#454545" stroke-width="1.15"/></svg>
<div class="t" style="left:33.90px;top:239.56px;height:13.440000000000001px;line-height:13.440000000000001px;font-size:8.4px;font-weight:700;color:#6b5949;transform:scaleX(0.827);transform-origin:0 50%;">Product Management</div>
<div class="t" style="left:143.10px;top:239.56px;height:13.440000000000001px;line-height:13.440000000000001px;font-size:8.4px;font-weight:700;color:#6b5949;transform:scaleX(0.822);transform-origin:0 50%;">Remaining availability</div>
<div class="t" style="right:562.80px;top:238.90px;height:13.76px;line-height:13.76px;font-size:8.6px;font-weight:400;color:#504858;transform:scaleX(0.772);transform-origin:100% 50%;">57,6 %</div>
<div style="left:293.4px;top:236.41px;width:75.0px;height:18.13px;background:#f2c0aa;"></div>
<div style="left:292.9px;top:236.41px;width:1.0px;height:18.13px;background:#e8b8a4;"></div>
<div class="t" style="right:487.80px;top:238.90px;height:13.76px;line-height:13.76px;font-size:8.6px;font-weight:400;color:#504858;transform:scaleX(0.772);transform-origin:100% 50%;">-0,3 %</div>
<div style="left:368.4px;top:236.41px;width:76.30000000000001px;height:18.13px;background:#f2c0aa;"></div>
<div style="left:367.9px;top:236.41px;width:1.0px;height:18.13px;background:#e8b8a4;"></div>
<div class="t" style="right:411.50px;top:238.90px;height:13.76px;line-height:13.76px;font-size:8.6px;font-weight:400;color:#504858;transform:scaleX(0.772);transform-origin:100% 50%;">-30,6 %</div>
<div style="left:444.2px;top:236.41px;width:1.0px;height:18.13px;background:#e8b8a4;"></div>
<div class="t" style="right:336.20px;top:238.90px;height:13.76px;line-height:13.76px;font-size:8.6px;font-weight:400;color:#504858;transform:scaleX(0.772);transform-origin:100% 50%;">6,2 %</div>
<div style="left:520.0px;top:236.41px;width:74.70000000000005px;height:18.13px;background:#f2c0aa;"></div>
<div style="left:519.5px;top:236.41px;width:1.0px;height:18.13px;background:#e8b8a4;"></div>
<div class="t" style="right:261.50px;top:238.90px;height:13.76px;line-height:13.76px;font-size:8.6px;font-weight:400;color:#504858;transform:scaleX(0.772);transform-origin:100% 50%;">-64,1 %</div>
<div style="left:594.7px;top:236.41px;width:75.0px;height:18.13px;background:#f2c0aa;"></div>
<div style="left:594.2px;top:236.41px;width:1.0px;height:18.13px;background:#e8b8a4;"></div>
<div class="t" style="right:186.50px;top:238.90px;height:13.76px;line-height:13.76px;font-size:8.6px;font-weight:400;color:#504858;transform:scaleX(0.772);transform-origin:100% 50%;">-2,7 %</div>
<div style="left:669.2px;top:236.41px;width:1.0px;height:18.13px;background:#e8b8a4;"></div>
<div class="t" style="right:111.20px;top:238.90px;height:13.76px;line-height:13.76px;font-size:8.6px;font-weight:400;color:#504858;transform:scaleX(0.772);transform-origin:100% 50%;">32,2 %</div>
<div style="left:744.5px;top:236.41px;width:1.0px;height:18.13px;background:#bdbdeb;"></div>
<div class="t" style="right:47.20px;top:238.90px;height:13.76px;line-height:13.76px;font-size:8.6px;font-weight:400;color:#504858;transform:scaleX(0.772);transform-origin:100% 50%;">76,3 %</div>
<div style="left:30px;top:254.54px;width:779px;height:18.13px;background:#fff;"></div>
<div style="left:9.2px;top:254.54px;width:1px;height:18.13px;background:#d6bcf5;"></div>
<div style="left:16.2px;top:254.54px;width:1px;height:18.13px;background:#c9c9f8;"></div>
<div style="left:2.8px;top:254.54px;width:1px;height:18.13px;background:#d4d4f6;"></div>
<div style="left:29.7px;top:254.54px;width:1.0px;height:18.13px;background:#e6e6e6;"></div>
<div style="left:139.1px;top:254.54px;width:1.0px;height:18.13px;background:#e6e6e6;"></div>
<div style="left:219.5px;top:254.54px;width:1.0px;height:18.13px;background:#e6e6e6;"></div>
<div class="t" style="left:67.40px;top:256.71px;height:14.4px;line-height:14.4px;font-size:9px;font-weight:400;color:#474747;transform:scaleX(0.776);transform-origin:0 50%;">JONES Nolan</div>
<div class="t" style="left:143.30px;top:256.71px;height:14.4px;line-height:14.4px;font-size:9px;font-weight:400;color:#474747;transform:scaleX(0.824);transform-origin:0 50%;">Remaining availability</div>
<div class="t" style="right:562.80px;top:257.03px;height:13.76px;line-height:13.76px;font-size:8.6px;font-weight:400;color:#4a4a4a;transform:scaleX(0.772);transform-origin:100% 50%;">100,0 %</div>
<div style="left:292.9px;top:254.54px;width:1.0px;height:18.13px;background:#e6e6e6;"></div>
<div class="t" style="right:487.80px;top:257.03px;height:13.76px;line-height:13.76px;font-size:8.6px;font-weight:400;color:#4a4a4a;transform:scaleX(0.772);transform-origin:100% 50%;">100,0 %</div>
<div style="left:367.9px;top:254.54px;width:1.0px;height:18.13px;background:#e6e6e6;"></div>
<div class="t" style="right:411.50px;top:257.03px;height:13.76px;line-height:13.76px;font-size:8.6px;font-weight:400;color:#4a4a4a;transform:scaleX(0.772);transform-origin:100% 50%;">100,0 %</div>
<div style="left:444.2px;top:254.54px;width:1.0px;height:18.13px;background:#e6e6e6;"></div>
<div class="t" style="right:336.20px;top:257.03px;height:13.76px;line-height:13.76px;font-size:8.6px;font-weight:400;color:#4a4a4a;transform:scaleX(0.772);transform-origin:100% 50%;">100,0 %</div>
<div style="left:519.5px;top:254.54px;width:1.0px;height:18.13px;background:#e6e6e6;"></div>
<div style="left:594.2px;top:254.54px;width:1.0px;height:18.13px;background:#e6e6e6;"></div>
<div style="left:669.2px;top:254.54px;width:1.0px;height:18.13px;background:#e6e6e6;"></div>
<div style="left:744.5px;top:254.54px;width:1.0px;height:18.13px;background:#e6e6e6;"></div>
<div style="left:30px;top:272.66999999999996px;width:779px;height:18.13px;background:#fff;"></div>
<div style="left:9.2px;top:272.66999999999996px;width:1px;height:18.13px;background:#d6bcf5;"></div>
<div style="left:16.2px;top:272.66999999999996px;width:1px;height:18.13px;background:#c9c9f8;"></div>
<div style="left:2.8px;top:272.66999999999996px;width:1px;height:18.13px;background:#d4d4f6;"></div>
<div style="left:29.7px;top:272.66999999999996px;width:1.0px;height:18.13px;background:#e6e6e6;"></div>
<div style="left:139.1px;top:272.66999999999996px;width:1.0px;height:18.13px;background:#e6e6e6;"></div>
<div style="left:219.5px;top:272.66999999999996px;width:1.0px;height:18.13px;background:#e6e6e6;"></div>
<div class="t" style="left:67.40px;top:274.83px;height:14.4px;line-height:14.4px;font-size:9px;font-weight:400;color:#474747;transform:scaleX(0.783);transform-origin:0 50%;">SNOW Jack</div>
<div class="t" style="left:143.30px;top:274.83px;height:14.4px;line-height:14.4px;font-size:9px;font-weight:400;color:#474747;transform:scaleX(0.824);transform-origin:0 50%;">Remaining availability</div>
<div class="t" style="right:562.80px;top:275.15px;height:13.76px;line-height:13.76px;font-size:8.6px;font-weight:400;color:#4a4a4a;transform:scaleX(0.772);transform-origin:100% 50%;">100,0 %</div>
<div style="left:292.9px;top:272.66999999999996px;width:1.0px;height:18.13px;background:#e6e6e6;"></div>
<div class="t" style="right:487.80px;top:275.15px;height:13.76px;line-height:13.76px;font-size:8.6px;font-weight:400;color:#4a4a4a;transform:scaleX(0.772);transform-origin:100% 50%;">100,0 %</div>
<div style="left:367.9px;top:272.66999999999996px;width:1.0px;height:18.13px;background:#e6e6e6;"></div>
<div class="t" style="right:411.50px;top:275.15px;height:13.76px;line-height:13.76px;font-size:8.6px;font-weight:400;color:#4a4a4a;transform:scaleX(0.772);transform-origin:100% 50%;">100,0 %</div>
<div style="left:444.2px;top:272.66999999999996px;width:1.0px;height:18.13px;background:#e6e6e6;"></div>
<div class="t" style="right:336.20px;top:275.15px;height:13.76px;line-height:13.76px;font-size:8.6px;font-weight:400;color:#4a4a4a;transform:scaleX(0.772);transform-origin:100% 50%;">100,0 %</div>
<div style="left:519.5px;top:272.66999999999996px;width:1.0px;height:18.13px;background:#e6e6e6;"></div>
<div class="t" style="right:261.50px;top:275.15px;height:13.76px;line-height:13.76px;font-size:8.6px;font-weight:400;color:#4a4a4a;transform:scaleX(0.772);transform-origin:100% 50%;">100,0 %</div>
<div style="left:594.2px;top:272.66999999999996px;width:1.0px;height:18.13px;background:#e6e6e6;"></div>
<div class="t" style="right:186.50px;top:275.15px;height:13.76px;line-height:13.76px;font-size:8.6px;font-weight:400;color:#4a4a4a;transform:scaleX(0.772);transform-origin:100% 50%;">100,0 %</div>
<div style="left:669.2px;top:272.66999999999996px;width:1.0px;height:18.13px;background:#e6e6e6;"></div>
<div class="t" style="right:111.20px;top:275.15px;height:13.76px;line-height:13.76px;font-size:8.6px;font-weight:400;color:#4a4a4a;transform:scaleX(0.772);transform-origin:100% 50%;">100,0 %</div>
<div style="left:744.5px;top:272.66999999999996px;width:1.0px;height:18.13px;background:#e6e6e6;"></div>
<div class="t" style="right:47.20px;top:275.15px;height:13.76px;line-height:13.76px;font-size:8.6px;font-weight:400;color:#4a4a4a;transform:scaleX(0.772);transform-origin:100% 50%;">100,0 %</div>
<div style="left:3.5px;top:181.51999999999998px;width:805.5px;height:1px;background:#e6e6e6;"></div>
<div style="left:3.5px;top:199.64999999999998px;width:805.5px;height:1px;background:#e6e6e6;"></div>
<div style="left:3.5px;top:217.77999999999997px;width:805.5px;height:1px;background:#e6e6e6;"></div>
<div style="left:3.5px;top:235.91px;width:805.5px;height:1px;background:#e6e6e6;"></div>
<div style="left:3.5px;top:272.17px;width:805.5px;height:1px;background:#e6e6e6;"></div>
<div style="left:3.5px;top:290.29999999999995px;width:805.5px;height:1px;background:#e6e6e6;"></div>
<svg style="left:16.3px;top:232.11px" width="5" height="4.5" viewBox="0 0 5 4.5"><path d="M0 0 L4.6 4.5 L0 4.5 Z" fill="#c9c9f8"/></svg>
<div style="left:2.8px;top:290.79999999999995px;width:1px;height:4.800000000000068px;background:#d4d4f6;"></div>
<div style="left:9.2px;top:290.79999999999995px;width:1px;height:4.800000000000068px;background:#d6bcf5;"></div>
<div style="left:16.2px;top:290.79999999999995px;width:1px;height:4.800000000000068px;background:#c9c9f8;"></div>
<div style="left:29.7px;top:290.79999999999995px;width:1.0px;height:4.800000000000068px;background:#e6e6e6;"></div>
<div style="left:139.1px;top:290.79999999999995px;width:1.0px;height:4.800000000000068px;background:#e6e6e6;"></div>
<div style="left:219.5px;top:290.79999999999995px;width:1.0px;height:4.800000000000068px;background:#e6e6e6;"></div>
<div style="left:292.9px;top:290.79999999999995px;width:1.0px;height:4.800000000000068px;background:#e6e6e6;"></div>
<div style="left:367.9px;top:290.79999999999995px;width:1.0px;height:4.800000000000068px;background:#e6e6e6;"></div>
<div style="left:444.2px;top:290.79999999999995px;width:1.0px;height:4.800000000000068px;background:#e6e6e6;"></div>
<div style="left:519.5px;top:290.79999999999995px;width:1.0px;height:4.800000000000068px;background:#e6e6e6;"></div>
<div style="left:594.2px;top:290.79999999999995px;width:1.0px;height:4.800000000000068px;background:#e6e6e6;"></div>
<div style="left:669.2px;top:290.79999999999995px;width:1.0px;height:4.800000000000068px;background:#e6e6e6;"></div>
<div style="left:744.5px;top:290.79999999999995px;width:1.0px;height:4.800000000000068px;background:#e6e6e6;"></div>
<div style="left:520.0px;top:290.79999999999995px;width:74.70000000000005px;height:4.800000000000068px;background:#f2c0aa;"></div>
<div style="left:815.2px;top:110.8px;width:5.6px;height:141.2px;background:#c6c6c6;border-radius:2.5px"></div>
<div style="left:3px;top:295.6px;width:818px;height:4.4px;background:#e6e6e6;"></div>
<div style="left:3px;top:300px;width:818px;height:177px;background:#fff;"></div>
<svg style="left:9.8px;top:310.10px" width="8" height="7" viewBox="0 0 8 7"><path d="M0.9 6.2 L2.6 2.2 Q3.4 0.9 4.6 1.3 Q5.6 1.8 5.9 3.5 L6.3 6.2" fill="none" stroke="#14f014" stroke-width="1.5" stroke-linecap="round"/></svg>
<div class="t" style="left:17.60px;top:307.32px;height:13.76px;line-height:13.76px;font-size:8.6px;font-weight:400;color:#404040;transform:scaleX(0.860);transform-origin:0 50%;">Managed resources availability</div>
<svg style="left:10.2px;top:322.72px" width="6" height="5" viewBox="0 0 6 5"><rect x="0" y="2.4" width="2.4" height="2.4" fill="#555"/><rect x="0" y="2.4" width="2.4" height="2.4" fill="#673ab7" opacity="0.75"/><rect x="3.2" y="0" width="2.4" height="4.8" fill="#673ab7"/></svg>
<div class="t" style="left:17.60px;top:318.24px;height:13.76px;line-height:13.76px;font-size:8.6px;font-weight:400;color:#404040;transform:scaleX(0.812);transform-origin:0 50%;">ADAMS Erin</div>
<svg style="left:10.2px;top:333.64px" width="6" height="5" viewBox="0 0 6 5"><rect x="0" y="2.4" width="2.4" height="2.4" fill="#555"/><rect x="0" y="2.4" width="2.4" height="2.4" fill="#3f51b5" opacity="0.75"/><rect x="3.2" y="0" width="2.4" height="4.8" fill="#3f51b5"/></svg>
<div class="t" style="left:17.60px;top:329.16px;height:13.76px;line-height:13.76px;font-size:8.6px;font-weight:400;color:#404040;transform:scaleX(0.806);transform-origin:0 50%;">BROWN Cameron</div>
<svg style="left:10.2px;top:344.56px" width="6" height="5" viewBox="0 0 6 5"><rect x="0" y="2.4" width="2.4" height="2.4" fill="#555"/><rect x="0" y="2.4" width="2.4" height="2.4" fill="#e57373" opacity="0.75"/><rect x="3.2" y="0" width="2.4" height="4.8" fill="#e57373"/></svg>
<div class="t" style="left:17.60px;top:340.08px;height:13.76px;line-height:13.76px;font-size:8.6px;font-weight:400;color:#404040;transform:scaleX(0.816);transform-origin:0 50%;">BROWN Nathan</div>
<svg style="left:10.2px;top:355.48px" width="6" height="5" viewBox="0 0 6 5"><rect x="0" y="2.4" width="2.4" height="2.4" fill="#555"/><rect x="0" y="2.4" width="2.4" height="2.4" fill="#2196f3" opacity="0.75"/><rect x="3.2" y="0" width="2.4" height="4.8" fill="#2196f3"/></svg>
<div class="t" style="left:17.60px;top:351.00px;height:13.76px;line-height:13.76px;font-size:8.6px;font-weight:400;color:#404040;transform:scaleX(0.785);transform-origin:0 50%;">COX Blake</div>
<svg style="left:10.2px;top:366.40px" width="6" height="5" viewBox="0 0 6 5"><rect x="0" y="2.4" width="2.4" height="2.4" fill="#555"/><rect x="0" y="2.4" width="2.4" height="2.4" fill="#9c27b0" opacity="0.75"/><rect x="3.2" y="0" width="2.4" height="4.8" fill="#9c27b0"/></svg>
<div class="t" style="left:17.60px;top:361.92px;height:13.76px;line-height:13.76px;font-size:8.6px;font-weight:400;color:#404040;transform:scaleX(0.863);transform-origin:0 50%;">Customer relationship management</div>
<svg style="left:10.2px;top:377.32px" width="6" height="5" viewBox="0 0 6 5"><rect x="0" y="2.4" width="2.4" height="2.4" fill="#555"/><rect x="0" y="2.4" width="2.4" height="2.4" fill="#f44336" opacity="0.75"/><rect x="3.2" y="0" width="2.4" height="4.8" fill="#f44336"/></svg>
<div class="t" style="left:17.60px;top:372.84px;height:13.76px;line-height:13.76px;font-size:8.6px;font-weight:400;color:#404040;transform:scaleX(0.833);transform-origin:0 50%;">Design &amp; Engineering</div>
<svg style="left:10.2px;top:388.24px" width="6" height="5" viewBox="0 0 6 5"><rect x="0" y="2.4" width="2.4" height="2.4" fill="#555"/><rect x="0" y="2.4" width="2.4" height="2.4" fill="#00bcd4" opacity="0.75"/><rect x="3.2" y="0" width="2.4" height="4.8" fill="#00bcd4"/></svg>
<div class="t" style="left:17.60px;top:383.76px;height:13.76px;line-height:13.76px;font-size:8.6px;font-weight:400;color:#404040;transform:scaleX(0.860);transform-origin:0 50%;">Product Benchmarking</div>
<svg style="left:10.2px;top:399.16px" width="6" height="5" viewBox="0 0 6 5"><rect x="0" y="2.4" width="2.4" height="2.4" fill="#555"/><rect x="0" y="2.4" width="2.4" height="2.4" fill="#009688" opacity="0.75"/><rect x="3.2" y="0" width="2.4" height="4.8" fill="#009688"/></svg>
<div class="t" style="left:17.60px;top:394.68px;height:13.76px;line-height:13.76px;font-size:8.6px;font-weight:400;color:#404040;transform:scaleX(0.862);transform-origin:0 50%;">Product Management</div>
<svg style="left:10.2px;top:410.08px" width="6" height="5" viewBox="0 0 6 5"><rect x="0" y="2.4" width="2.4" height="2.4" fill="#555"/><rect x="0" y="2.4" width="2.4" height="2.4" fill="#4caf50" opacity="0.75"/><rect x="3.2" y="0" width="2.4" height="4.8" fill="#4caf50"/></svg>
<div class="t" style="left:17.60px;top:405.60px;height:13.76px;line-height:13.76px;font-size:8.6px;font-weight:400;color:#404040;transform:scaleX(0.838);transform-origin:0 50%;">Sales Engineering</div>
<div class="t" style="right:639.70px;top:457.28px;height:13.440000000000001px;line-height:13.440000000000001px;font-size:8.4px;font-weight:400;color:#3a3a3a;transform:scaleX(0.814);transform-origin:100% 50%;">0,0</div>
<div class="t" style="right:639.70px;top:445.75px;height:13.440000000000001px;line-height:13.440000000000001px;font-size:8.4px;font-weight:400;color:#3a3a3a;transform:scaleX(0.814);transform-origin:100% 50%;">5,0</div>
<div style="left:220.5px;top:455.07px;width:600px;height:0;border-top:0.8px dotted #ebebeb"></div>
<div class="t" style="right:639.70px;top:434.22px;height:13.440000000000001px;line-height:13.440000000000001px;font-size:8.4px;font-weight:400;color:#3a3a3a;transform:scaleX(0.814);transform-origin:100% 50%;">10,0</div>
<div style="left:220.5px;top:443.54px;width:600px;height:0;border-top:0.8px dotted #ebebeb"></div>
<div class="t" style="right:639.70px;top:422.69px;height:13.440000000000001px;line-height:13.440000000000001px;font-size:8.4px;font-weight:400;color:#3a3a3a;transform:scaleX(0.814);transform-origin:100% 50%;">15,0</div>
<div style="left:220.5px;top:432.01px;width:600px;height:0;border-top:0.8px dotted #ebebeb"></div>
<div class="t" style="right:639.70px;top:411.16px;height:13.440000000000001px;line-height:13.440000000000001px;font-size:8.4px;font-weight:400;color:#3a3a3a;transform:scaleX(0.814);transform-origin:100% 50%;">20,0</div>
<div style="left:220.5px;top:420.48px;width:600px;height:0;border-top:0.8px dotted #ebebeb"></div>
<div class="t" style="right:639.70px;top:399.63px;height:13.440000000000001px;line-height:13.440000000000001px;font-size:8.4px;font-weight:400;color:#3a3a3a;transform:scaleX(0.814);transform-origin:100% 50%;">25,0</div>
<div style="left:220.5px;top:408.95px;width:600px;height:0;border-top:0.8px dotted #ebebeb"></div>
<div class="t" style="right:639.70px;top:388.10px;height:13.440000000000001px;line-height:13.440000000000001px;font-size:8.4px;font-weight:400;color:#3a3a3a;transform:scaleX(0.814);transform-origin:100% 50%;">30,0</div>
<div style="left:220.5px;top:397.42px;width:600px;height:0;border-top:0.8px dotted #ebebeb"></div>
<div class="t" style="right:639.70px;top:376.57px;height:13.440000000000001px;line-height:13.440000000000001px;font-size:8.4px;font-weight:400;color:#3a3a3a;transform:scaleX(0.814);transform-origin:100% 50%;">35,0</div>
<div style="left:220.5px;top:385.89px;width:600px;height:0;border-top:0.8px dotted #ebebeb"></div>
<div class="t" style="right:639.70px;top:365.04px;height:13.440000000000001px;line-height:13.440000000000001px;font-size:8.4px;font-weight:400;color:#3a3a3a;transform:scaleX(0.814);transform-origin:100% 50%;">40,0</div>
<div style="left:220.5px;top:374.36px;width:600px;height:0;border-top:0.8px dotted #ebebeb"></div>
<div class="t" style="right:639.70px;top:353.51px;height:13.440000000000001px;line-height:13.440000000000001px;font-size:8.4px;font-weight:400;color:#3a3a3a;transform:scaleX(0.814);transform-origin:100% 50%;">45,0</div>
<div style="left:220.5px;top:362.83px;width:600px;height:0;border-top:0.8px dotted #ebebeb"></div>
<div class="t" style="right:639.70px;top:341.98px;height:13.440000000000001px;line-height:13.440000000000001px;font-size:8.4px;font-weight:400;color:#3a3a3a;transform:scaleX(0.814);transform-origin:100% 50%;">50,0</div>
<div style="left:220.5px;top:351.30px;width:600px;height:0;border-top:0.8px dotted #ebebeb"></div>
<div class="t" style="right:639.70px;top:330.45px;height:13.440000000000001px;line-height:13.440000000000001px;font-size:8.4px;font-weight:400;color:#3a3a3a;transform:scaleX(0.814);transform-origin:100% 50%;">55,0</div>
<div style="left:220.5px;top:339.77px;width:600px;height:0;border-top:0.8px dotted #ebebeb"></div>
<div class="t" style="right:639.70px;top:318.92px;height:13.440000000000001px;line-height:13.440000000000001px;font-size:8.4px;font-weight:400;color:#3a3a3a;transform:scaleX(0.814);transform-origin:100% 50%;">60,0</div>
<div style="left:220.5px;top:328.24px;width:600px;height:0;border-top:0.8px dotted #ebebeb"></div>
<div class="t" style="right:639.70px;top:307.39px;height:13.440000000000001px;line-height:13.440000000000001px;font-size:8.4px;font-weight:400;color:#3a3a3a;transform:scaleX(0.814);transform-origin:100% 50%;">65,0</div>
<div style="left:220.5px;top:316.71px;width:600px;height:0;border-top:0.8px dotted #ebebeb"></div>
<div style="left:219.8px;top:303px;width:0.7px;height:164.5px;background:#eeeeee;"></div>
<div style="left:3px;top:467.2px;width:217px;height:0.7px;background:#f2f2f2;"></div>
<div style="left:520px;top:302px;width:0;height:166px;border-left:0.8px dotted #cfcfcf"></div>
<div style="left:229.0px;top:414.60px;width:55.20px;height:52.40px;background:#9c27b0"></div>
<div style="left:229.0px;top:426.50px;width:55.20px;height:40.50px;background:#f44336"></div>
<div style="left:229.0px;top:448.10px;width:55.20px;height:18.90px;background:#00bcd4"></div>
<div style="left:229.0px;top:452.20px;width:55.20px;height:14.80px;background:#009688"></div>
<div style="left:229.0px;top:451.80px;width:55.20px;height:0.8px;background:rgba(110,110,110,0.75)"></div>
<div style="left:229.0px;top:447.70px;width:55.20px;height:0.8px;background:rgba(110,110,110,0.75)"></div>
<div style="left:229.0px;top:426.10px;width:55.20px;height:0.8px;background:rgba(110,110,110,0.75)"></div>
<div style="left:229.0px;top:414.20px;width:55.20px;height:0.8px;background:rgba(110,110,110,0.75)"></div>
<div style="left:228.70px;top:414.30px;width:55.80px;height:52.70px;box-sizing:border-box;border:0.6px solid rgba(110,110,110,0.55);border-bottom:0"></div>
<div style="left:303.0px;top:369.20px;width:56.20px;height:97.80px;background:#2196f3"></div>
<div style="left:303.0px;top:370.80px;width:56.20px;height:96.20px;background:#3f51b5"></div>
<div style="left:303.0px;top:372.60px;width:56.20px;height:94.40px;background:#9c27b0"></div>
<div style="left:303.0px;top:384.50px;width:56.20px;height:82.50px;background:#f44336"></div>
<div style="left:303.0px;top:415.00px;width:56.20px;height:52.00px;background:#00bcd4"></div>
<div style="left:303.0px;top:428.70px;width:56.20px;height:38.30px;background:#009688"></div>
<div style="left:303.0px;top:466.00px;width:56.20px;height:1.00px;background:#4caf50"></div>
<div style="left:303.0px;top:465.60px;width:56.20px;height:0.8px;background:rgba(110,110,110,0.75)"></div>
<div style="left:303.0px;top:428.30px;width:56.20px;height:0.8px;background:rgba(110,110,110,0.75)"></div>
<div style="left:303.0px;top:414.60px;width:56.20px;height:0.8px;background:rgba(110,110,110,0.75)"></div>
<div style="left:303.0px;top:384.10px;width:56.20px;height:0.8px;background:rgba(110,110,110,0.75)"></div>
<div style="left:303.0px;top:372.20px;width:56.20px;height:0.8px;background:rgba(110,110,110,0.75)"></div>
<div style="left:303.0px;top:370.40px;width:56.20px;height:0.8px;background:rgba(110,110,110,0.75)"></div>
<div style="left:303.0px;top:368.80px;width:56.20px;height:0.8px;background:rgba(110,110,110,0.75)"></div>
<div style="left:302.70px;top:368.90px;width:56.80px;height:98.10px;box-sizing:border-box;border:0.6px solid rgba(110,110,110,0.55);border-bottom:0"></div>
<div style="left:378.1px;top:319.20px;width:56.70px;height:147.80px;background:#673ab7"></div>
<div style="left:378.1px;top:322.00px;width:56.70px;height:145.00px;background:#3f51b5"></div>
<div style="left:378.1px;top:325.30px;width:56.70px;height:141.70px;background:#2196f3"></div>
<div style="left:378.1px;top:328.30px;width:56.70px;height:138.70px;background:#9c27b0"></div>
<div style="left:378.1px;top:347.30px;width:56.70px;height:119.70px;background:#f44336"></div>
<div style="left:378.1px;top:385.00px;width:56.70px;height:82.00px;background:#00bcd4"></div>
<div style="left:378.1px;top:403.30px;width:56.70px;height:63.70px;background:#009688"></div>
<div style="left:378.1px;top:450.70px;width:56.70px;height:16.30px;background:#4caf50"></div>
<div style="left:378.1px;top:450.30px;width:56.70px;height:0.8px;background:rgba(110,110,110,0.75)"></div>
<div style="left:378.1px;top:402.90px;width:56.70px;height:0.8px;background:rgba(110,110,110,0.75)"></div>
<div style="left:378.1px;top:384.60px;width:56.70px;height:0.8px;background:rgba(110,110,110,0.75)"></div>
<div style="left:378.1px;top:346.90px;width:56.70px;height:0.8px;background:rgba(110,110,110,0.75)"></div>
<div style="left:378.1px;top:327.90px;width:56.70px;height:0.8px;background:rgba(110,110,110,0.75)"></div>
<div style="left:378.1px;top:324.90px;width:56.70px;height:0.8px;background:rgba(110,110,110,0.75)"></div>
<div style="left:378.1px;top:321.60px;width:56.70px;height:0.8px;background:rgba(110,110,110,0.75)"></div>
<div style="left:378.1px;top:318.80px;width:56.70px;height:0.8px;background:rgba(110,110,110,0.75)"></div>
<div style="left:377.80px;top:318.90px;width:57.30px;height:148.10px;box-sizing:border-box;border:0.6px solid rgba(110,110,110,0.55);border-bottom:0"></div>
<div style="left:454.4px;top:382.10px;width:56.90px;height:84.90px;background:#777"></div>
<div style="left:454.4px;top:384.20px;width:56.90px;height:82.80px;background:#9c27b0"></div>
<div style="left:454.4px;top:387.00px;width:56.90px;height:80.00px;background:#f44336"></div>
<div style="left:454.4px;top:425.20px;width:56.90px;height:41.80px;background:#00bcd4"></div>
<div style="left:454.4px;top:433.10px;width:56.90px;height:33.90px;background:#009688"></div>
<div style="left:454.4px;top:432.70px;width:56.90px;height:0.8px;background:rgba(110,110,110,0.75)"></div>
<div style="left:454.4px;top:424.80px;width:56.90px;height:0.8px;background:rgba(110,110,110,0.75)"></div>
<div style="left:454.4px;top:386.60px;width:56.90px;height:0.8px;background:rgba(110,110,110,0.75)"></div>
<div style="left:454.4px;top:383.80px;width:56.90px;height:0.8px;background:rgba(110,110,110,0.75)"></div>
<div style="left:454.4px;top:381.70px;width:56.90px;height:0.8px;background:rgba(110,110,110,0.75)"></div>
<div style="left:454.10px;top:381.80px;width:57.50px;height:85.20px;box-sizing:border-box;border:0.6px solid rgba(110,110,110,0.55);border-bottom:0"></div>
<div style="left:529.8px;top:395.00px;width:55.80px;height:72.00px;background:#9c27b0"></div>
<div style="left:529.8px;top:399.30px;width:55.80px;height:67.70px;background:#f44336"></div>
<div style="left:529.8px;top:431.20px;width:55.80px;height:35.80px;background:#00bcd4"></div>
<div style="left:529.8px;top:440.90px;width:55.80px;height:26.10px;background:#009688"></div>
<div style="left:529.8px;top:440.50px;width:55.80px;height:0.8px;background:rgba(110,110,110,0.75)"></div>
<div style="left:529.8px;top:430.80px;width:55.80px;height:0.8px;background:rgba(110,110,110,0.75)"></div>
<div style="left:529.8px;top:398.90px;width:55.80px;height:0.8px;background:rgba(110,110,110,0.75)"></div>
<div style="left:529.8px;top:394.60px;width:55.80px;height:0.8px;background:rgba(110,110,110,0.75)"></div>
<div style="left:529.50px;top:394.70px;width:56.40px;height:72.30px;box-sizing:border-box;border:0.6px solid rgba(110,110,110,0.55);border-bottom:0"></div>
<div style="left:604.0px;top:416.90px;width:56.60px;height:50.10px;background:#9c27b0"></div>
<div style="left:604.0px;top:419.80px;width:56.60px;height:47.20px;background:#f44336"></div>
<div style="left:604.0px;top:444.10px;width:56.60px;height:22.90px;background:#00bcd4"></div>
<div style="left:604.0px;top:451.30px;width:56.60px;height:15.70px;background:#009688"></div>
<div style="left:604.0px;top:450.90px;width:56.60px;height:0.8px;background:rgba(110,110,110,0.75)"></div>
<div style="left:604.0px;top:443.70px;width:56.60px;height:0.8px;background:rgba(110,110,110,0.75)"></div>
<div style="left:604.0px;top:419.40px;width:56.60px;height:0.8px;background:rgba(110,110,110,0.75)"></div>
<div style="left:604.0px;top:416.50px;width:56.60px;height:0.8px;background:rgba(110,110,110,0.75)"></div>
<div style="left:603.70px;top:416.60px;width:57.20px;height:50.40px;box-sizing:border-box;border:0.6px solid rgba(110,110,110,0.55);border-bottom:0"></div>
<div style="left:679.1px;top:427.10px;width:57.00px;height:39.90px;background:#673ab7"></div>
<div style="left:679.1px;top:429.00px;width:57.00px;height:38.00px;background:#3f51b5"></div>
<div style="left:679.1px;top:431.00px;width:57.00px;height:36.00px;background:#2196f3"></div>
<div style="left:679.1px;top:433.70px;width:57.00px;height:33.30px;background:#f44336"></div>
<div style="left:679.1px;top:452.20px;width:57.00px;height:14.80px;background:#00bcd4"></div>
<div style="left:679.1px;top:457.10px;width:57.00px;height:9.90px;background:#009688"></div>
<div style="left:679.1px;top:456.70px;width:57.00px;height:0.8px;background:rgba(110,110,110,0.75)"></div>
<div style="left:679.1px;top:451.80px;width:57.00px;height:0.8px;background:rgba(110,110,110,0.75)"></div>
<div style="left:679.1px;top:433.30px;width:57.00px;height:0.8px;background:rgba(110,110,110,0.75)"></div>
<div style="left:679.1px;top:430.60px;width:57.00px;height:0.8px;background:rgba(110,110,110,0.75)"></div>
<div style="left:679.1px;top:428.60px;width:57.00px;height:0.8px;background:rgba(110,110,110,0.75)"></div>
<div style="left:679.1px;top:426.70px;width:57.00px;height:0.8px;background:rgba(110,110,110,0.75)"></div>
<div style="left:678.80px;top:426.80px;width:57.60px;height:40.20px;box-sizing:border-box;border:0.6px solid rgba(110,110,110,0.55);border-bottom:0"></div>
<div style="left:754.9px;top:454.30px;width:56.80px;height:12.70px;background:#673ab7"></div>
<div style="left:754.9px;top:456.00px;width:56.80px;height:11.00px;background:#2196f3"></div>
<div style="left:754.9px;top:458.40px;width:56.80px;height:8.60px;background:#f44336"></div>
<div style="left:754.9px;top:464.00px;width:56.80px;height:3.00px;background:#009688"></div>
<div style="left:754.9px;top:463.60px;width:56.80px;height:0.8px;background:rgba(110,110,110,0.75)"></div>
<div style="left:754.9px;top:458.00px;width:56.80px;height:0.8px;background:rgba(110,110,110,0.75)"></div>
<div style="left:754.9px;top:455.60px;width:56.80px;height:0.8px;background:rgba(110,110,110,0.75)"></div>
<div style="left:754.9px;top:453.90px;width:56.80px;height:0.8px;background:rgba(110,110,110,0.75)"></div>
<div style="left:754.60px;top:454.00px;width:57.40px;height:13.00px;box-sizing:border-box;border:0.6px solid rgba(110,110,110,0.55);border-bottom:0"></div>
<svg style="left:0;top:0" width="853" height="480" viewBox="0 0 853 480"><path d="M220.5 366.2 H521 V419 H821" fill="none" stroke="#14f014" stroke-width="1.6"/></svg>
<div style="left:523.5px;top:471.4px;width:174px;height:5.4px;background:#c8c8c8;border-radius:3px"></div>
</body></html>
